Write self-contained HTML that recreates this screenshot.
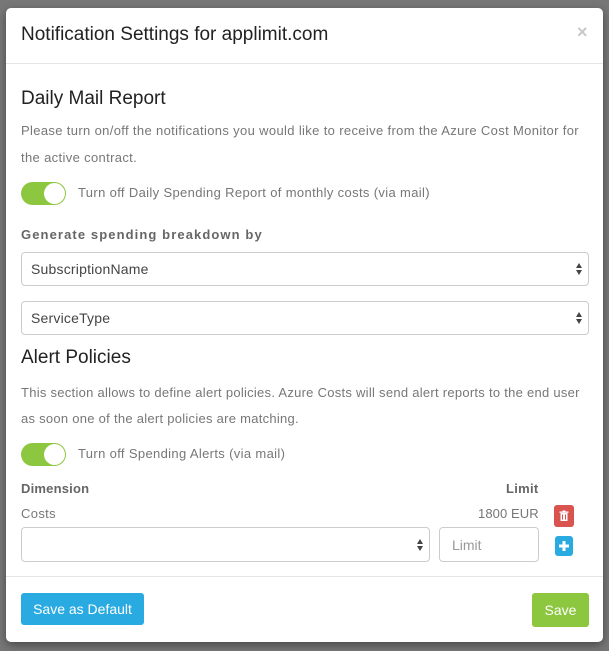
<!DOCTYPE html>
<html><head><style>
*{box-sizing:border-box;margin:0;padding:0}
body{width:609px;height:651px;background:#777;font-family:"Liberation Sans",sans-serif;position:relative;overflow:hidden}
.m{position:absolute;left:6px;top:8px;width:597px;height:634px;background:#fff;border-radius:5px;box-shadow:0 3px 9px rgba(0,0,0,.4)}
.a{position:absolute;white-space:nowrap}
.t{font-size:19px;color:#222}
.p{font-size:13px;color:#777;letter-spacing:.35px}
.b{font-size:13px;font-weight:bold;color:#666}
.sel{position:absolute;border:1px solid #ccc;border-radius:4px;font-size:14px;color:#444;padding-left:9px;display:flex;align-items:center;letter-spacing:.2px}
.sel:after{content:"";position:absolute;right:6px;top:50%;margin-top:-6px;width:0;height:0;border-left:3.5px solid transparent;border-right:3.5px solid transparent;border-bottom:5px solid #444}
.sel:before{content:"";position:absolute;right:6px;top:50%;margin-top:1px;width:0;height:0;border-left:3.5px solid transparent;border-right:3.5px solid transparent;border-top:5px solid #444}
.tg{position:absolute;width:45px;height:23px;background:#8dc63f;border-radius:12px}
.tg i{position:absolute;right:1px;top:1px;width:21px;height:21px;background:#fff;border-radius:50%}
</style></head><body>
<div class="m">
<div class="a t" style="left:15px;top:16px">Notification Settings for applimit.com</div>
<div class="a" style="left:571px;top:14px;font-size:18px;color:#c8c8c8;font-weight:bold">×</div>
<div class="a" style="left:0;top:55px;width:597px;height:1px;background:#e5e5e5"></div>
<div class="a t" style="left:15px;top:80px">Daily Mail Report</div>
<div class="a p" style="left:15px;top:109px;line-height:27px">Please turn on/off the notifications you would like to receive from the Azure Cost Monitor for<br>the active contract.</div>
<div class="tg" style="left:15px;top:174px"><i></i></div>
<div class="a p" style="left:72px;top:177px">Turn off Daily Spending Report of monthly costs (via mail)</div>
<div class="a b" style="left:15px;top:219px;letter-spacing:1.1px">Generate spending breakdown by</div>
<div class="sel" style="left:15px;top:244px;width:568px;height:34px">SubscriptionName</div>
<div class="sel" style="left:15px;top:293px;width:568px;height:34px">ServiceType</div>
<div class="a t" style="left:15px;top:339px">Alert Policies</div>
<div class="a p" style="left:15px;top:372px;line-height:26px;letter-spacing:.27px">This section allows to define alert policies. Azure Costs will send alert reports to the end user<br>as soon one of the alert policies are matching.</div>
<div class="tg" style="left:15px;top:435px"><i></i></div>
<div class="a p" style="left:72px;top:438px">Turn off Spending Alerts (via mail)</div>
<div class="a b" style="left:15px;top:473px;letter-spacing:.2px">Dimension</div>
<div class="a b" style="left:500px;top:473px;letter-spacing:.3px">Limit</div>
<div class="a p" style="left:15px;top:498px">Costs</div>
<div class="a p" style="left:472px;top:498px;letter-spacing:.1px">1800 EUR</div>
<div class="a" style="left:548px;top:497px;width:20px;height:22px;background:#d9534f;border-radius:3px">
<svg width="20" height="22" viewBox="0 0 20 22"><rect x="6.5" y="8" width="7" height="8" fill="#fff"/><rect x="5.5" y="6.5" width="9" height="1.3" fill="#fff"/><rect x="8.5" y="5.5" width="3" height="1.2" fill="#fff"/><rect x="8" y="9.5" width="1" height="5" fill="#d9534f"/><rect x="11" y="9.5" width="1" height="5" fill="#d9534f"/></svg></div>
<div class="sel" style="left:15px;top:519px;width:409px;height:35px"></div>
<div class="a" style="left:433px;top:519px;width:100px;height:35px;border:1px solid #ccc;border-radius:4px;font-size:14px;color:#999;padding:9px 0 0 12px">Limit</div>
<div class="a" style="left:549px;top:528px;width:18px;height:20px;background:#29abe2;border-radius:3px">
<svg width="18" height="20"><rect x="4" y="8.5" width="10" height="3" fill="#fff"/><rect x="7.5" y="5" width="3" height="10" fill="#fff"/></svg></div>
<div class="a" style="left:0;top:568px;width:597px;height:1px;background:#e5e5e5"></div>
<div class="a" style="left:15px;top:585px;width:123px;height:32px;background:#29abe2;border-radius:3px;color:#fff;font-size:14px;text-align:center;line-height:32px">Save as Default</div>
<div class="a" style="left:526px;top:585px;width:57px;height:34px;background:#8dc63f;border-radius:3px;color:#fff;font-size:14px;text-align:center;line-height:34px">Save</div>
</div>
</body></html>
